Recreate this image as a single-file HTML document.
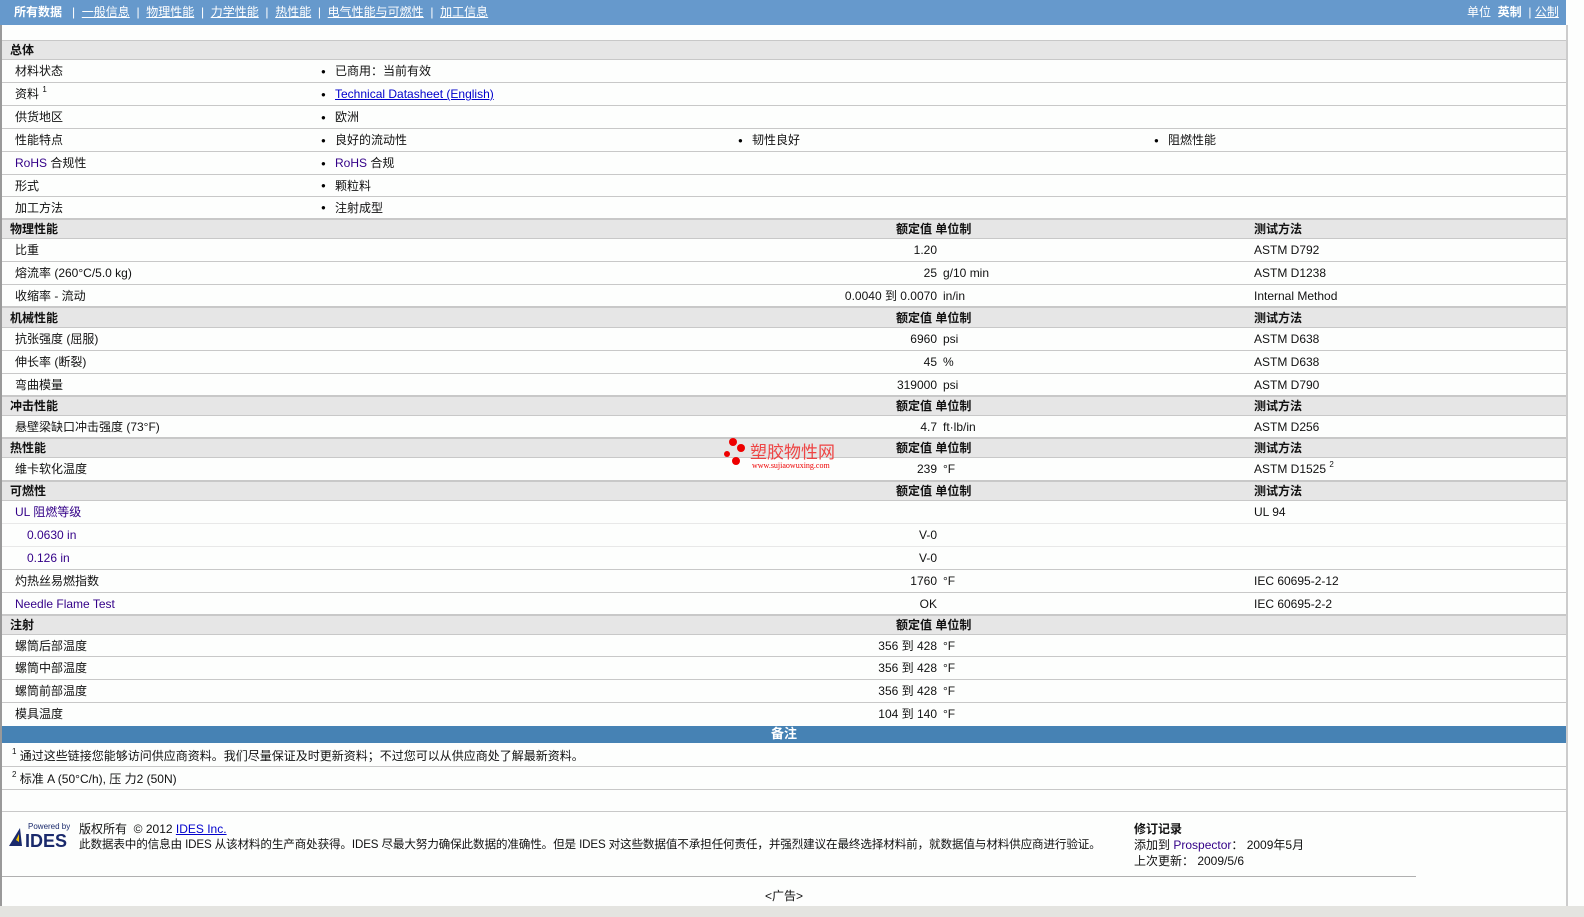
<!DOCTYPE html>
<html><head><meta charset="utf-8"><style>
*{margin:0;padding:0;box-sizing:border-box}
html,body{overflow:hidden}
body{width:1584px;height:917px;background:#fdfefd;font-family:"Liberation Sans","Noto Sans CJK SC",sans-serif;font-size:12px;color:#111;position:relative}
sup{font-size:8px;line-height:0;vertical-align:6px}
.a{position:absolute;white-space:nowrap}
.nav{position:absolute;left:0;top:0;width:1566px;height:25px;background:#6699cc;color:#fff;font-size:12px;line-height:25px}
.nav u{text-decoration:underline}
.r{position:absolute;left:2px;width:1564px;border-bottom:1px solid #c8c8c8}
.s{background:#e6e6e6;font-weight:bold;border-top:1px solid #c8c8c8}
.r span{position:absolute;top:0}
.p{color:#330088}
.b::before{content:"●";font-size:8px;position:absolute;left:-14px;top:0;color:#000}
</style></head><body>
<div class="nav">
<span class="a" style="left:14px;font-weight:bold">所有数据</span>
<span class="a" style="left:72px">|&nbsp; <u>一般信息</u> &nbsp;|&nbsp; <u>物理性能</u> &nbsp;|&nbsp; <u>力学性能</u> &nbsp;|&nbsp; <u>热性能</u> &nbsp;|&nbsp; <u>电气性能与可燃性</u> &nbsp;|&nbsp; <u>加工信息</u></span>
<span class="a" style="left:1467px">单位 &nbsp;<b>英制</b> &nbsp;| <u>公制</u></span>
</div>
<div class="a" style="left:0;top:25px;width:2px;height:885px;background:#999"></div>
<div class="a" style="left:1566px;top:25px;width:2px;height:885px;background:#ccc"></div>

<div class="r s" style="top:40px;height:20px;line-height:19px"><span style="left:8px">总体</span></div>
<div class="r" style="top:60px;height:23px;line-height:23px"><span style="left:13px">材料状态</span><span class="b" style="left:333px">已商用：当前有效</span></div>
<div class="r" style="top:83px;height:23px;line-height:23px"><span style="left:13px">资料 <sup>1</sup></span><span class="b" style="left:333px;color:#00c;text-decoration:underline">Technical Datasheet (English)</span></div>
<div class="r" style="top:106px;height:23px;line-height:23px"><span style="left:13px">供货地区</span><span class="b" style="left:333px">欧洲</span></div>
<div class="r" style="top:129px;height:23px;line-height:23px"><span style="left:13px">性能特点</span><span class="b" style="left:333px">良好的流动性</span><span class="b" style="left:750px">韧性良好</span><span class="b" style="left:1166px">阻燃性能</span></div>
<div class="r" style="top:152px;height:23px;line-height:23px"><span class="p" style="left:13px">RoHS <span style="color:#111;position:static">合规性</span></span><span class="b p" style="left:333px">RoHS <span style="color:#111;position:static">合规</span></span></div>
<div class="r" style="top:175px;height:22px;line-height:22px"><span style="left:13px">形式</span><span class="b" style="left:333px">颗粒料</span></div>
<div class="r" style="top:197px;height:22px;line-height:22px"><span style="left:13px">加工方法</span><span class="b" style="left:333px">注射成型</span></div>

<div class="r s" style="top:219px;height:20px;line-height:19px"><span style="left:8px">物理性能</span><span style="left:894px">额定值 单位制</span><span style="left:1252px">测试方法</span></div>
<div class="r" style="top:239px;height:23px;line-height:23px"><span style="left:13px">比重</span><span style="right:629px">1.20</span><span style="left:1252px">ASTM D792</span></div>
<div class="r" style="top:262px;height:23px;line-height:23px"><span style="left:13px">熔流率 (260°C/5.0 kg)</span><span style="right:629px">25</span><span style="left:941px">g/10 min</span><span style="left:1252px">ASTM D1238</span></div>
<div class="r" style="top:285px;height:22px;line-height:22px"><span style="left:13px">收缩率 - 流动</span><span style="right:629px">0.0040 到 0.0070</span><span style="left:941px">in/in</span><span style="left:1252px">Internal Method</span></div>

<div class="r s" style="top:307px;height:21px;line-height:20px"><span style="left:8px">机械性能</span><span style="left:894px">额定值 单位制</span><span style="left:1252px">测试方法</span></div>
<div class="r" style="top:328px;height:23px;line-height:23px"><span style="left:13px">抗张强度 (屈服)</span><span style="right:629px">6960</span><span style="left:941px">psi</span><span style="left:1252px">ASTM D638</span></div>
<div class="r" style="top:351px;height:23px;line-height:23px"><span style="left:13px">伸长率 (断裂)</span><span style="right:629px">45</span><span style="left:941px">%</span><span style="left:1252px">ASTM D638</span></div>
<div class="r" style="top:374px;height:22px;line-height:22px"><span style="left:13px">弯曲模量</span><span style="right:629px">319000</span><span style="left:941px">psi</span><span style="left:1252px">ASTM D790</span></div>

<div class="r s" style="top:396px;height:20px;line-height:19px"><span style="left:8px">冲击性能</span><span style="left:894px">额定值 单位制</span><span style="left:1252px">测试方法</span></div>
<div class="r" style="top:416px;height:22px;line-height:22px"><span style="left:13px">悬壁梁缺口冲击强度 (73°F)</span><span style="right:629px">4.7</span><span style="left:941px">ft·lb/in</span><span style="left:1252px">ASTM D256</span></div>
<div class="r s" style="top:438px;height:20px;line-height:19px"><span style="left:8px">热性能</span><span style="left:894px">额定值 单位制</span><span style="left:1252px">测试方法</span></div>
<div class="r" style="top:458px;height:23px;line-height:23px"><span style="left:13px">维卡软化温度</span><span style="right:629px">239</span><span style="left:941px">°F</span><span style="left:1252px">ASTM D1525 <sup>2</sup></span></div>
<div class="r s" style="top:481px;height:20px;line-height:19px"><span style="left:8px">可燃性</span><span style="left:894px">额定值 单位制</span><span style="left:1252px">测试方法</span></div>
<div class="r" style="top:501px;height:23px;line-height:23px;border-color:#e8e8e8"><span class="p" style="left:13px">UL 阻燃等级</span><span style="left:1252px">UL 94</span></div>
<div class="r" style="top:524px;height:23px;line-height:23px;border-color:#e8e8e8"><span class="p" style="left:25px">0.0630 in</span><span style="right:629px">V-0</span></div>
<div class="r" style="top:547px;height:23px;line-height:23px"><span class="p" style="left:25px">0.126 in</span><span style="right:629px">V-0</span></div>
<div class="r" style="top:570px;height:23px;line-height:23px"><span style="left:13px">灼热丝易燃指数</span><span style="right:629px">1760</span><span style="left:941px">°F</span><span style="left:1252px">IEC 60695-2-12</span></div>
<div class="r" style="top:593px;height:22px;line-height:22px"><span class="p" style="left:13px">Needle Flame Test</span><span style="right:629px">OK</span><span style="left:1252px">IEC 60695-2-2</span></div>
<div class="r s" style="top:615px;height:20px;line-height:19px"><span style="left:8px">注射</span><span style="left:894px">额定值 单位制</span></div>
<div class="r" style="top:635px;height:22px;line-height:22px"><span style="left:13px">螺筒后部温度</span><span style="right:629px">356 到 428</span><span style="left:941px">°F</span></div>
<div class="r" style="top:657px;height:23px;line-height:23px"><span style="left:13px">螺筒中部温度</span><span style="right:629px">356 到 428</span><span style="left:941px">°F</span></div>
<div class="r" style="top:680px;height:23px;line-height:23px"><span style="left:13px">螺筒前部温度</span><span style="right:629px">356 到 428</span><span style="left:941px">°F</span></div>
<div class="r" style="top:703px;height:23px;line-height:23px;border:none"><span style="left:13px">模具温度</span><span style="right:629px">104 到 140</span><span style="left:941px">°F</span></div>
<div class="r" style="top:726px;height:17px;line-height:16px;background:#4682b4;color:#fff;font-weight:bold;text-align:center;border:none;font-size:13px">备注</div>
<div class="r" style="top:743px;height:24px;line-height:26px"><span style="left:10px"><sup>1</sup> 通过这些链接您能够访问供应商资料。我们尽量保证及时更新资料；不过您可以从供应商处了解最新资料。</span></div>
<div class="r" style="top:767px;height:23px;line-height:25px"><span style="left:10px"><sup>2</sup> 标准 A (50°C/h), 压 力2 (50N)</span></div>
<div class="r" style="top:790px;height:22px"></div>

<div class="a" style="left:8px;top:822px;width:62px;height:28px">
<svg width="62" height="28"><polygon points="1,24 12,6 14,24" fill="#1a2a6c"/><polygon points="8,18 11,12 11,20" fill="#f0c000"/><text x="20" y="7" font-size="8" fill="#1a2a6c" font-family="Liberation Sans">Powered by</text><text x="17" y="25" font-size="18" font-weight="bold" fill="#1a2a6c" font-family="Liberation Sans">IDES</text></svg></div>
<div class="a" style="left:79px;top:822px;line-height:15px">版权所有 &nbsp;© 2012 <span style="color:#00c;text-decoration:underline">IDES Inc.</span><br><span style="font-size:11.6px;letter-spacing:-0.15px">此数据表中的信息由 IDES 从该材料的生产商处获得。IDES 尽最大努力确保此数据的准确性。但是 IDES 对这些数据值不承担任何责任，并强烈建议在最终选择材料前，就数据值与材料供应商进行验证。</span></div>
<div class="a" style="left:1134px;top:821px;line-height:16px"><b>修订记录</b><br>添加到 <span class="p">Prospector</span>： 2009年5月<br>上次更新： 2009/5/6</div>
<div class="a" style="left:2px;top:876px;width:1414px;height:1px;background:#b0b0b0"></div>
<div class="a" style="left:765px;top:887px">&lt;广告&gt;</div>
<div class="a" style="left:0;top:906px;width:1584px;height:11px;background:#e4e4e0"></div>

<div class="a" style="left:722px;top:436px;width:130px;height:36px">
<svg width="130" height="36"><circle cx="11" cy="6" r="4" fill="#e00"/><circle cx="19" cy="12" r="4" fill="#e00"/><circle cx="14" cy="25" r="4" fill="#e00"/><circle cx="5" cy="18" r="3" fill="#e00"/><text x="28" y="22" font-size="17" fill="#e44" font-family="Noto Sans CJK SC">塑胶物性网</text><text x="30" y="32" font-size="8" fill="#e00" font-family="Liberation Serif">www.sujiaowuxing.com</text></svg></div>
</body></html>
